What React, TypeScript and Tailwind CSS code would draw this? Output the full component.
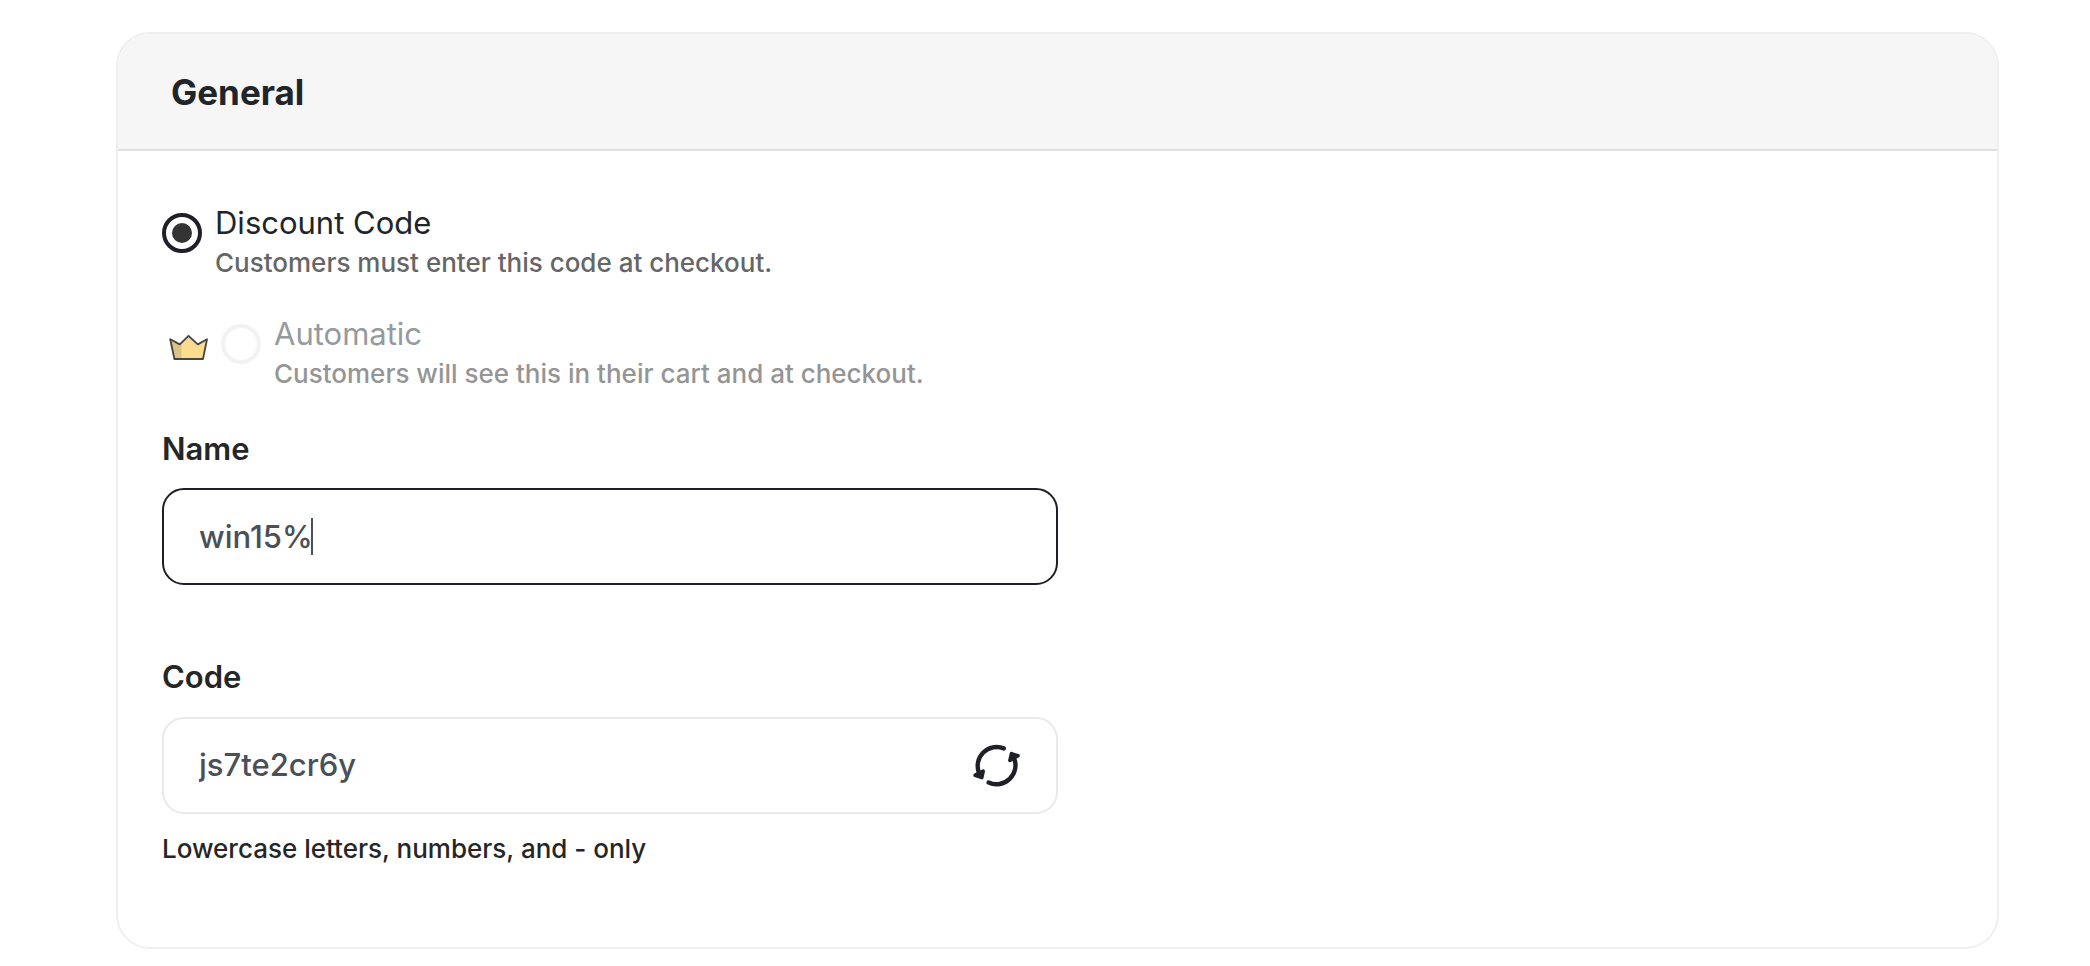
import { useState } from "react";

export default function App() {
  const [name, setName] = useState("win15%");
  const [code, setCode] = useState("js7te2cr6y");

  return (
    <main className="bg-white pt-8 pr-[91px] pb-[18px] pl-[116px] font-['Inter',sans-serif]">
      <section className="overflow-hidden rounded-[34px] border-2 border-[#efefef] bg-white">
        <header className="border-b-2 border-[#e0e0e0] bg-[#f6f6f6] px-[53px] pt-[37px] pb-[35px]">
          <h1 className="text-[35px] leading-[43px] font-bold text-[#212529]">General</h1>
        </header>

        <form className="px-11 pt-[52px] pb-[78px]" onSubmit={(e) => e.preventDefault()}>
          <div className="flex flex-col gap-[31px]">
            <TypeOption
              id="type-code"
              title="Discount Code"
              hint="Customers must enter this code at checkout."
            />
            <TypeOption
              id="type-automatic"
              title="Automatic"
              hint="Customers will see this in their cart and at checkout."
              locked
            />
          </div>

          <div className="mt-[35px] max-w-[896px]">
            <FieldLabel htmlFor="name">Name</FieldLabel>
            <div className="relative mt-[19px]">
              <input
                id="name"
                type="text"
                value={name}
                onChange={(e) => setName(e.target.value)}
                className="block h-[97px] w-full rounded-[22px] border-2 border-[#1f1d26] bg-white px-[35px] text-[31px] font-medium text-[#495057] caret-transparent outline-none"
              />
              <span className="absolute top-[30px] left-[149px] h-[37px] w-0.5 bg-[#495057]" />
            </div>
          </div>

          <div className="mt-[72px] max-w-[896px]">
            <FieldLabel htmlFor="code">Code</FieldLabel>
            <div className="mt-5 flex h-[97px] items-center rounded-[22px] border-2 border-[#e9e9e9] bg-white px-[35px]">
              <input
                id="code"
                type="text"
                value={code}
                onChange={(e) => setCode(e.target.value)}
                aria-describedby="code-hint"
                className="min-w-0 flex-1 bg-transparent text-[31px] font-medium text-[#495057] outline-none"
              />
              <button
                type="button"
                aria-label="Generate a new code"
                onClick={() => setCode(Math.random().toString(36).slice(2, 12))}
              >
                <RefreshIcon />
              </button>
            </div>
            <p id="code-hint" className="mt-[15px] text-[26px] leading-10 font-medium text-[#262626]">
              Lowercase letters, numbers, and - only
            </p>
          </div>
        </form>
      </section>
    </main>
  );
}

function TypeOption({
  id,
  title,
  hint,
  locked = false,
}: {
  id: string;
  title: string;
  hint: string;
  locked?: boolean;
}) {
  return (
    <div className="flex items-start">
      {locked && <CrownIcon />}
      <input
        id={id}
        type="radio"
        name="discount-type"
        defaultChecked={!locked}
        disabled={locked}
        className="mt-[10px] grid size-10 shrink-0 appearance-none place-content-center rounded-full border-4 border-[#1f1f28] bg-white before:size-5 before:rounded-full checked:before:bg-[#333333] disabled:border-[#f2f2f4]"
      />
      <label htmlFor={id} className="ml-[13px]">
        <span className={`block text-[31px] leading-10 ${locked ? "text-[#959a9e]" : "text-[#212529]"}`}>
          {title}
        </span>
        <span className={`block text-[26px] leading-10 font-medium ${locked ? "text-[#959595]" : "text-[#666666]"}`}>
          {hint}
        </span>
      </label>
    </div>
  );
}

function FieldLabel({ htmlFor, children }: { htmlFor: string; children: string }) {
  return (
    <label htmlFor={htmlFor} className="block text-[31px] leading-10 font-semibold text-[#262626]">
      {children}
    </label>
  );
}

function CrownIcon() {
  return (
    <svg className="mt-5 mr-3 ml-[7px] shrink-0" width="40" height="27" viewBox="0 0 40 27" fill="none">
      <path d="M1.2 5.2 10.8 10.4 19.5 1.8 28.8 10.4 38 5.2 34 25H5.4Z" fill="#fbdc8e" />
      <path d="M1.2 5.2 10.8 10.4 12.5 8.7V25H5.4Z" fill="#d9c486" />
      <path
        d="M1.2 5.2 10.8 10.4 19.5 1.8 28.8 10.4 38 5.2 34 25H5.4Z"
        stroke="#444444"
        strokeWidth="1.8"
        strokeLinejoin="round"
      />
    </svg>
  );
}

function RefreshIcon() {
  return (
    <svg width="48" height="44" viewBox="0 0 48 44" fill="none" stroke="#1f1f28" strokeLinecap="round" strokeLinejoin="round">
      <path d="M30.8 4.4A19 19 0 0 0 6 29" strokeWidth="4.4" />
      <path d="M15.6 38.6A19 19 0 0 0 41 14" strokeWidth="4.4" />
      <path d="M2.2 31.2 10.2 27.2 8.8 33.6Z" fill="#1f1f28" strokeWidth="3.6" />
      <path d="M36.9 16.4 38.5 9.6 45 11.8Z" fill="#1f1f28" strokeWidth="3.6" />
    </svg>
  );
}
